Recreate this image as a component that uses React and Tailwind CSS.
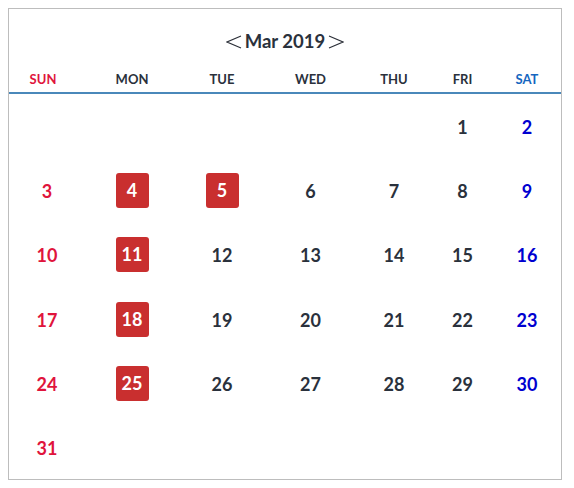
import React from "react";

const days = ["SUN", "MON", "TUE", "WED", "THU", "FRI", "SAT"];
const marked = [4, 5, 11, 18, 25];

const Arrow = ({ dir }) => (
  <svg width="16" height="14" viewBox="0 0 16 14" className="shrink-0">
    <polyline
      points={dir === "left" ? "15,1 1,7 15,13" : "1,1 15,7 1,13"}
      fill="none"
      stroke="#2b2f38"
      strokeWidth="1.1"
    />
  </svg>
);

const dayColor = (i) =>
  i === 0 ? "text-[#e0143c]" : i === 6 ? "text-[#0000d0]" : "text-[#2a313c]";

const headColor = (i) =>
  i === 0 ? "text-[#e0143c] pr-[8px]" : i === 6 ? "text-[#1466c0]" : "text-[#2a313c]";

const App = () => {
  // March 2019 starts on Friday
  const cells = [];
  for (let i = 0; i < 5; i++) cells.push(null);
  for (let d = 1; d <= 31; d++) cells.push(d);
  while (cells.length < 42) cells.push(null);

  return (
    <div
      className="m-2 w-[554px] h-[472px] border border-[#bdbdbd] bg-white flex flex-col"
      style={{ fontFamily: "Lato, 'Noto Sans', sans-serif" }}
    >
      <div className="h-[55px] pt-[10px] flex items-center justify-center gap-[3px] text-[18.5px] font-bold text-[#2a313c]">
        <Arrow dir="left" />
        <span className="leading-none">Mar 2019</span>
        <Arrow dir="right" />
      </div>
      <div className="grid grid-cols-[76px_94px_86px_91px_76px_61px_68px] h-[30px] pt-[3px] items-center border-b-2 border-[#4a88ba]">
        {days.map((d, i) => (
          <div key={d} className={`text-center text-[13px] font-bold ${headColor(i)}`}>
            {d}
          </div>
        ))}
      </div>
      <div className="grid grid-cols-[76px_94px_86px_91px_76px_61px_68px] grid-rows-6 flex-1">
        {cells.map((d, idx) => (
          <div key={idx} className="flex items-center justify-center">
            {d &&
              (marked.includes(d) ? (
                <span className="w-[33px] h-[35px] mt-[1px] rounded-[3px] bg-[#c92f2f] text-white flex items-center justify-center text-[18px] font-bold">
                  {d}
                </span>
              ) : (
                <span className={`pt-[3px] text-[18px] font-bold ${dayColor(idx % 7)}`}>{d}</span>
              ))}
          </div>
        ))}
      </div>
    </div>
  );
};

export default App;
